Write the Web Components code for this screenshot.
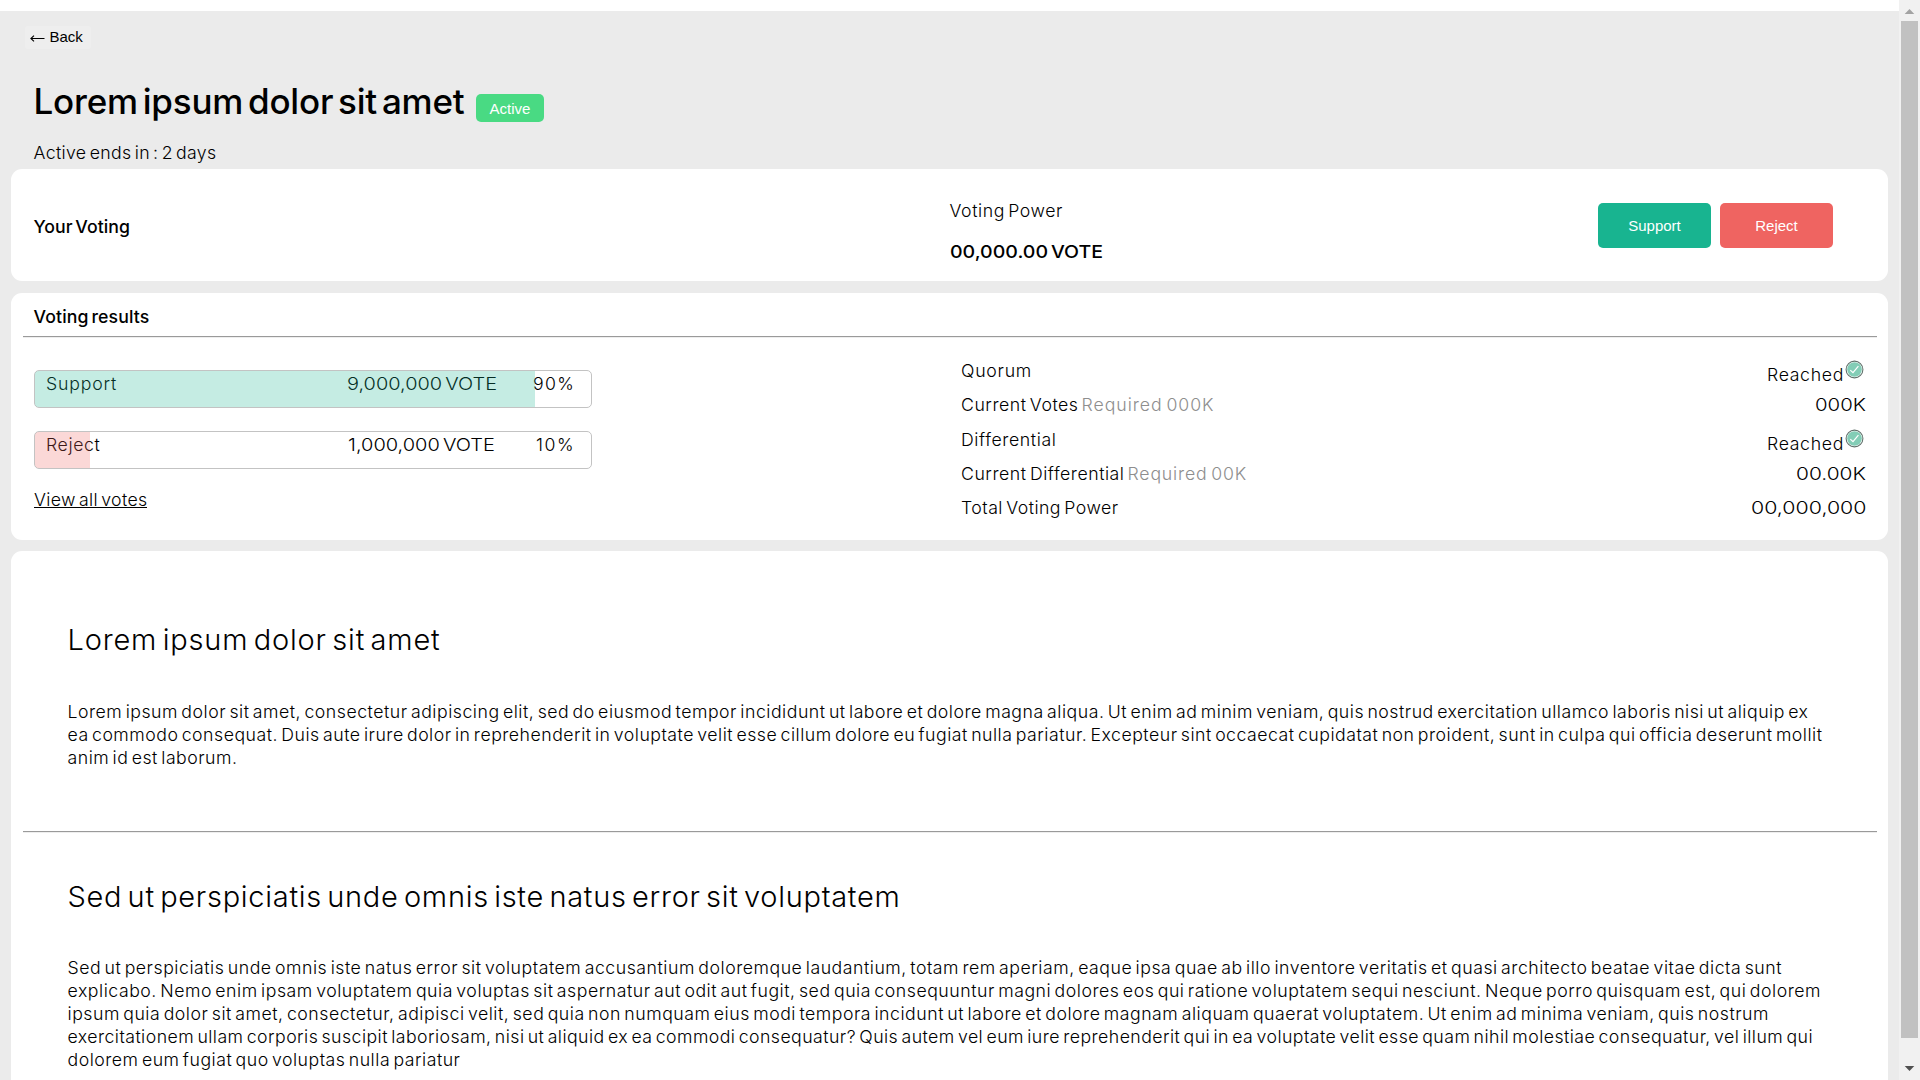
<!DOCTYPE html>
<html lang="en">
<head>
<meta charset="utf-8">
<title>Proposal</title>
<style>
html,body{margin:0;height:100%;overflow:hidden;background:#fff}
body{font-family:Inter,"Liberation Sans",sans-serif;font-size:17.7px;line-height:23px;font-weight:300;color:#000}
</style>
</head>
<body>
<proposal-page></proposal-page>
<script>
const define = (name, html, setup) => {
  const t = document.createElement('template');
  t.innerHTML = html;
  customElements.define(name, class extends HTMLElement {
    constructor() { super(); this.attachShadow({mode:'open'}).append(t.content.cloneNode(true)); }
    connectedCallback() { if (setup) setup(this, this.shadowRoot); }
  });
};

/* One line of text fitted to the w attribute: by tracking, or by widening the glyphs when "wide" is set */
define('fit-text', `<style>
:host{display:block;white-space:nowrap;flex:none}
span{display:inline-block;word-spacing:-.12em;transform-origin:0 0}
</style><span><slot></slot></span>`, (el, root) => {
  const s = root.querySelector('span');
  s.style.letterSpacing = '0px';
  const w = +el.getAttribute('w'), n = el.textContent.length;
  const natural = s.getBoundingClientRect().width;
  if (el.hasAttribute('wide')) s.style.transform = 'scaleX(' + w / natural + ')';
  else s.style.letterSpacing = ((w - natural) / n) + 'px';
  el.style.width = w + 'px';
});

define('back-button', `<style>
:host{display:block;width:66px;height:23px;background:#eeeeee;border-radius:3px;font:15px/21px "Liberation Sans",Arial,sans-serif}
div{display:flex;align-items:center;gap:5px;padding:0 5px;height:21px}
svg{display:block;margin-top:3px}
</style><div><svg width="15" height="9" viewBox="0 0 15 9" fill="none" stroke="#000" stroke-width="1.1"><path d="M.8 4.5H14.5M4 1.6.9 4.5 4 7.4"/></svg><span><slot></slot></span></div>`);

define('status-badge', `<style>
:host{display:block;width:68px;height:28px;border-radius:5px;background:#49da83;color:#fff;font:15px/29px "Liberation Sans",Arial,sans-serif;text-align:center}
</style><slot></slot>`);

define('vote-button', `<style>
:host{display:block;width:113px;height:45px;border-radius:5px;background:var(--c);color:#fff;font:15px/45px "Liberation Sans",Arial,sans-serif;text-align:center}
</style><slot></slot>`);

define('panel-card', `<style>
:host{display:block;box-sizing:border-box;background:#fff;border-radius:11px;width:1877px;margin-left:11px;flex:none}
</style><slot></slot>`);

define('rule-line', `<style>
:host{display:block;height:1px;margin:0 11px 0 12px;background:#9a9a9a;border-bottom:1px solid #eee}
</style>`);

define('result-bar', `<style>
:host{display:grid;box-sizing:border-box;width:558px;height:38px;border:1px solid #c3c3c3;border-radius:5px;overflow:hidden}
.row,.fill{grid-area:1/1}
.row{display:flex;padding:1px 0 0 11px;height:23px}
.fill{background:var(--c);width:var(--p);height:36px;z-index:1}
</style><div class="row"><slot></slot></div><div class="fill"></div>`);

define('check-icon', `<style>:host{display:block;width:19px;height:19px}svg{display:block}</style>
<svg width="19" height="19" viewBox="0 0 19 19" fill="none"><circle cx="9.5" cy="9.5" r="8.4" fill="#fff" stroke="#62716c" stroke-width="1.1"/><circle cx="9.5" cy="9.5" r="7.3" fill="#83cdb6"/><path d="M5.3 10.1 8 12.7 13.4 6.2" stroke="#fff" stroke-width="1.2"/></svg>`);

define('stat-row', `<style>
:host{display:flex;justify-content:space-between;height:34.35px;width:905px}
.l{display:flex;gap:3px}
.r{display:flex}
::slotted(check-icon){margin:1px 2px 0 1px}
</style><div class="l"><slot></slot></div><div class="r"><slot name="value"></slot></div>`);

define('text-section', `<style>
:host{display:block;padding-left:56.5px}
.h{font-size:29px;line-height:37px;margin-bottom:var(--space,42px)}
</style><div class="h"><slot name="title"></slot></div><slot></slot>`);

define('scroll-rail', `<style>
:host{display:flex;flex-direction:column;align-items:center;width:21px;height:1080px;background:#f1f1f1;flex:none}
.b{height:21px;display:flex;flex:none}
.t{width:17px;height:1017px;background:#c1c1c1;flex:none}
svg{display:block}
</style><div class="b"><svg width="21" height="21"><path d="M5.7 14 10.5 9 15.3 14Z" fill="#a3a3a3"/></svg></div><div class="t"></div><div class="b"><svg width="21" height="42"><path d="M5.7 28H15.3L10.5 33Z" fill="#505050"/></svg></div>`);

define('proposal-page', `<style>
:host{display:flex;width:1920px;height:1080px;overflow:hidden}
main{width:1899px;height:1080px;overflow:hidden;display:flex;flex-direction:column;box-sizing:border-box;background:#ebebeb;border-top:11px solid #fff}
header{height:158px;flex:none;padding-left:33.5px;box-sizing:border-box}
back-button{margin:15px 0 0 -9px}
.title{display:flex;margin-top:29px;gap:11.5px;height:45px}
.title fit-text{font-size:35px;line-height:45px;font-weight:500;margin-top:1px}
.title status-badge{margin-top:16px}
.ends{margin-top:18px}
panel-card.mine{height:112px;margin-bottom:12px}
.voting{display:flex}
.b{font-weight:500}
.name{margin:46px 0 0 22.5px}
.power{margin:29.5px 0 0 819.5px;width:648.5px}
.power .b{margin-top:18px}
.btns{display:flex;gap:9px;margin-top:34px}
.results{height:247px;margin-bottom:11px}
.results>.b{padding:12px 0 8px 22.5px}
.cols{display:flex;padding-left:23px}
.bars{width:927px;padding-top:32px}
.bars result-bar{margin-bottom:23px}
.amt{margin-left:auto}
.link{display:block;margin-top:-4px;text-decoration:none;border-bottom:1px solid #000;width:113px;height:19px}
.stats{padding-top:21px}
.g{color:#8e8e8e}
.low{margin-top:4px}
.text{height:700px}
text-section{padding-top:70px}
.s1{height:210px}
.s2{padding-top:45px}
</style>
<main>
<header>
 <back-button>Back</back-button>
 <div class="title"><fit-text w="431">Lorem ipsum dolor sit amet</fit-text><status-badge>Active</status-badge></div>
 <fit-text class="ends" w="183">Active ends in : 2 days</fit-text>
</header>
<panel-card class="mine"><div class="voting">
 <fit-text class="name b" w="96.5">Your Voting</fit-text>
 <div class="power"><fit-text w="113.5">Voting Power</fit-text><fit-text wide class="b" w="153">00,000.00 VOTE</fit-text></div>
 <div class="btns"><vote-button style="--c:#18b490">Support</vote-button><vote-button style="--c:#ef6461">Reject</vote-button></div>
</div></panel-card>
<panel-card class="results">
 <div class="b"><fit-text w="116">Voting results</fit-text></div>
 <rule-line></rule-line>
 <div class="cols">
  <div class="bars">
   <result-bar style="--c:rgba(24,180,144,.25);--p:500px"><fit-text w="71">Support</fit-text><fit-text wide class="amt" w="150">9,000,000 VOTE</fit-text><fit-text style="margin:0 16px 0 36px" w="42">90%</fit-text></result-bar>
   <result-bar style="--c:rgba(239,100,97,.25);--p:55px"><fit-text w="54.5">Reject</fit-text><fit-text wide class="amt" w="147">1,000,000 VOTE</fit-text><fit-text style="margin:0 16px 0 41px" w="39">10%</fit-text></result-bar>
   <a class="link"><fit-text w="113.5">View all votes</fit-text></a>
  </div>
  <div class="stats">
   <stat-row><fit-text w="71">Quorum</fit-text><fit-text slot="value" class="low" w="77">Reached</fit-text><check-icon slot="value"></check-icon></stat-row>
   <stat-row><fit-text w="117.5">Current Votes</fit-text><fit-text class="g" w="133">Required 000K</fit-text><fit-text wide slot="value" w="51">000K</fit-text></stat-row>
   <stat-row><fit-text w="95.5">Differential</fit-text><fit-text slot="value" class="low" w="77">Reached</fit-text><check-icon slot="value"></check-icon></stat-row>
   <stat-row><fit-text w="163.5">Current Differential</fit-text><fit-text class="g" w="119.5">Required 00K</fit-text><fit-text wide slot="value" w="70">00.00K</fit-text></stat-row>
   <stat-row><fit-text w="157.5">Total Voting Power</fit-text><fit-text wide slot="value" w="115.5">00,000,000</fit-text></stat-row>
  </div>
 </div>
</panel-card>
<panel-card class="text">
 <text-section class="s1"><fit-text slot="title" w="373">Lorem ipsum dolor sit amet</fit-text>
  <fit-text w="1741">Lorem ipsum dolor sit amet, consectetur adipiscing elit, sed do eiusmod tempor incididunt ut labore et dolore magna aliqua. Ut enim ad minim veniam, quis nostrud exercitation ullamco laboris nisi ut aliquip ex</fit-text>
  <fit-text w="1755">ea commodo consequat. Duis aute irure dolor in reprehenderit in voluptate velit esse cillum dolore eu fugiat nulla pariatur. Excepteur sint occaecat cupidatat non proident, sunt in culpa qui officia deserunt mollit</fit-text>
  <fit-text w="170">anim id est laborum.</fit-text>
 </text-section>
 <rule-line></rule-line>
 <text-section class="s2" style="--space:41px"><fit-text slot="title" w="833">Sed ut perspiciatis unde omnis iste natus error sit voluptatem</fit-text>
  <fit-text w="1714.5">Sed ut perspiciatis unde omnis iste natus error sit voluptatem accusantium doloremque laudantium, totam rem aperiam, eaque ipsa quae ab illo inventore veritatis et quasi architecto beatae vitae dicta sunt</fit-text>
  <fit-text w="1753.5">explicabo. Nemo enim ipsam voluptatem quia voluptas sit aspernatur aut odit aut fugit, sed quia consequuntur magni dolores eos qui ratione voluptatem sequi nesciunt. Neque porro quisquam est, qui dolorem</fit-text>
  <fit-text w="1701.5">ipsum quia dolor sit amet, consectetur, adipisci velit, sed quia non numquam eius modi tempora incidunt ut labore et dolore magnam aliquam quaerat voluptatem. Ut enim ad minima veniam, quis nostrum</fit-text>
  <fit-text w="1745.5">exercitationem ullam corporis suscipit laboriosam, nisi ut aliquid ex ea commodi consequatur? Quis autem vel eum iure reprehenderit qui in ea voluptate velit esse quam nihil molestiae consequatur, vel illum qui</fit-text>
  <fit-text w="393">dolorem eum fugiat quo voluptas nulla pariatur</fit-text>
 </text-section>
</panel-card>
</main>
<scroll-rail></scroll-rail>`);
</script>
</body>
</html>
